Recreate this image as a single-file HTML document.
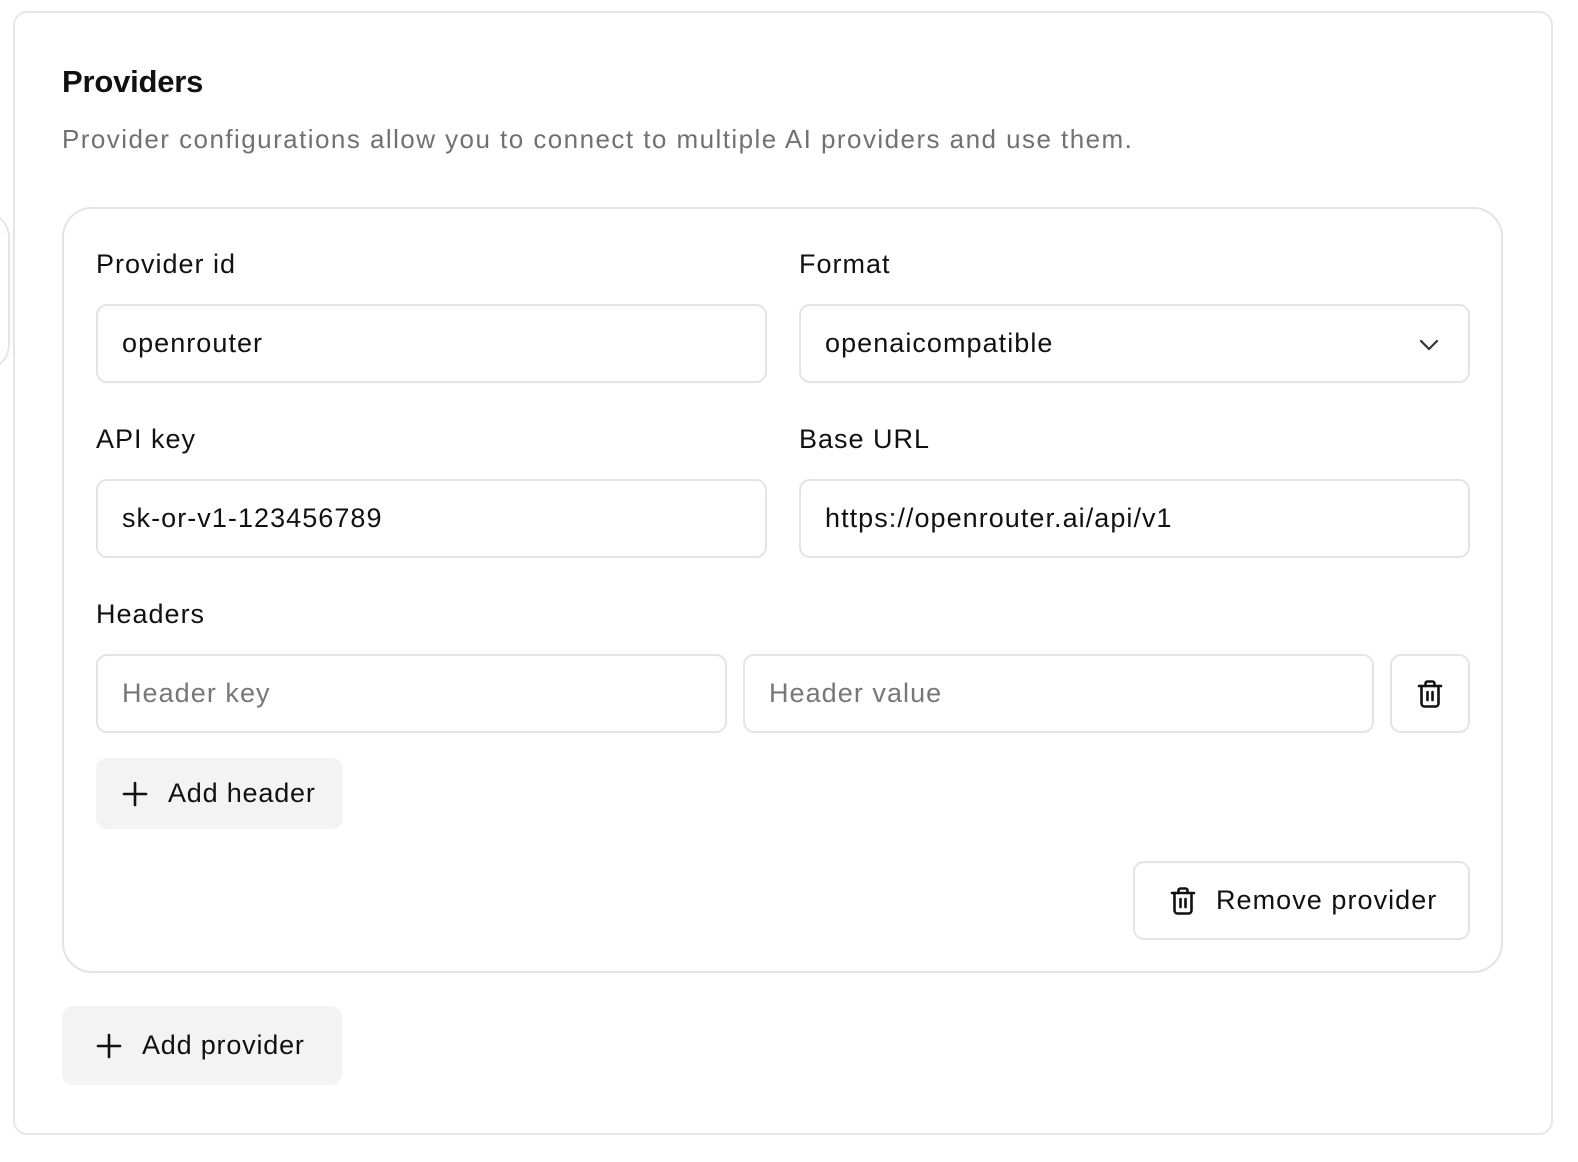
<!DOCTYPE html>
<html><head><meta charset="utf-8"><style>
*{box-sizing:border-box;margin:0;padding:0}
body{width:1578px;height:1162px;background:#fff;font-family:"Liberation Sans",sans-serif;color:#111;position:relative;overflow:hidden}
.abs{position:absolute}
.outer{left:13px;top:11px;width:1540px;height:1124px;border:2px solid #e6e6e6;border-radius:14px}
.ghost{left:-60px;top:210px;width:70px;height:162px;border:2px solid #e6e6e6;border-radius:28px}
.inner{left:62px;top:207px;width:1441px;height:766px;border:2px solid #e4e4e4;border-radius:30px}
h1{position:absolute;left:62px;top:64px;font-size:31px;font-weight:700;letter-spacing:-0.2px}
.sub{left:62px;top:124px;font-size:26px;color:#70707a;letter-spacing:1.45px;white-space:nowrap}
.lbl{font-size:27px;font-weight:500;color:#111;letter-spacing:1px}
.inp{border:2px solid #e4e4e4;border-radius:11px;height:79px;font-size:27px;padding-left:24px;display:flex;align-items:center;background:#fff;letter-spacing:1.05px;white-space:nowrap}
.ph{color:#777}
.btn{background:#f3f3f3;border-radius:11px;display:flex;align-items:center;font-size:27px;font-weight:500;letter-spacing:0.8px}
</style></head><body>
<div class="abs ghost"></div>
<div class="abs outer"></div>
<h1>Providers</h1>
<div class="abs sub">Provider configurations allow you to connect to multiple AI providers and use them.</div>
<div class="abs inner"></div>

<div class="abs lbl" style="left:96px;top:249px">Provider id</div>
<div class="abs lbl" style="left:799px;top:249px">Format</div>
<div class="abs inp" style="left:96px;top:304px;width:671px">openrouter</div>
<div class="abs inp" style="left:799px;top:304px;width:671px">openaicompatible
<svg class="abs" style="left:616px;top:27px" width="24" height="24" viewBox="0 0 24 24"><path d="M4 8l8 8 8-8" fill="none" stroke="#333" stroke-width="2.2" stroke-linecap="round" stroke-linejoin="round"/></svg></div>

<div class="abs lbl" style="left:96px;top:424px">API key</div>
<div class="abs lbl" style="left:799px;top:424px">Base URL</div>
<div class="abs inp" style="left:96px;top:479px;width:671px">sk-or-v1-123456789</div>
<div class="abs inp" style="left:799px;top:479px;width:671px">https://openrouter.ai/api/v1</div>

<div class="abs lbl" style="left:96px;top:599px">Headers</div>
<div class="abs inp ph" style="left:96px;top:654px;width:631px">Header key</div>
<div class="abs inp ph" style="left:743px;top:654px;width:631px">Header value</div>
<div class="abs inp" style="left:1390px;top:654px;width:80px;padding:0;justify-content:center">
<svg width="28" height="30" viewBox="0 0 28 30"><g fill="none" stroke="#111" stroke-width="2.6" stroke-linecap="round" stroke-linejoin="round"><path d="M3 7h22"/><path d="M9.5 7V4.5a2 2 0 0 1 2-2h5a2 2 0 0 1 2 2V7"/><path d="M5.5 7v17.5a3 3 0 0 0 3 3h11a3 3 0 0 0 3-3V7"/><path d="M11.5 13v8M16.5 13v8"/></g></svg></div>

<div class="abs btn" style="left:96px;top:758px;width:247px;height:71px;padding-left:26px">
<svg width="26" height="26" viewBox="0 0 26 26" style="margin-right:20px"><path d="M13 2v22M2 13h22" stroke="#111" stroke-width="2.6" stroke-linecap="round"/></svg>Add header</div>

<div class="abs inp" style="left:1133px;top:861px;width:337px;padding-left:34px">
<svg width="28" height="30" viewBox="0 0 28 30" style="margin-right:19px"><g fill="none" stroke="#111" stroke-width="2.6" stroke-linecap="round" stroke-linejoin="round"><path d="M3 7h22"/><path d="M9.5 7V4.5a2 2 0 0 1 2-2h5a2 2 0 0 1 2 2V7"/><path d="M5.5 7v17.5a3 3 0 0 0 3 3h11a3 3 0 0 0 3-3V7"/><path d="M11.5 13v8M16.5 13v8"/></g></svg><span style="font-weight:500">Remove provider</span></div>

<div class="abs btn" style="left:62px;top:1006px;width:280px;height:79px;padding-left:34px">
<svg width="26" height="26" viewBox="0 0 26 26" style="margin-right:20px"><path d="M13 2v22M2 13h22" stroke="#111" stroke-width="2.6" stroke-linecap="round"/></svg>Add provider</div>
</body></html>
